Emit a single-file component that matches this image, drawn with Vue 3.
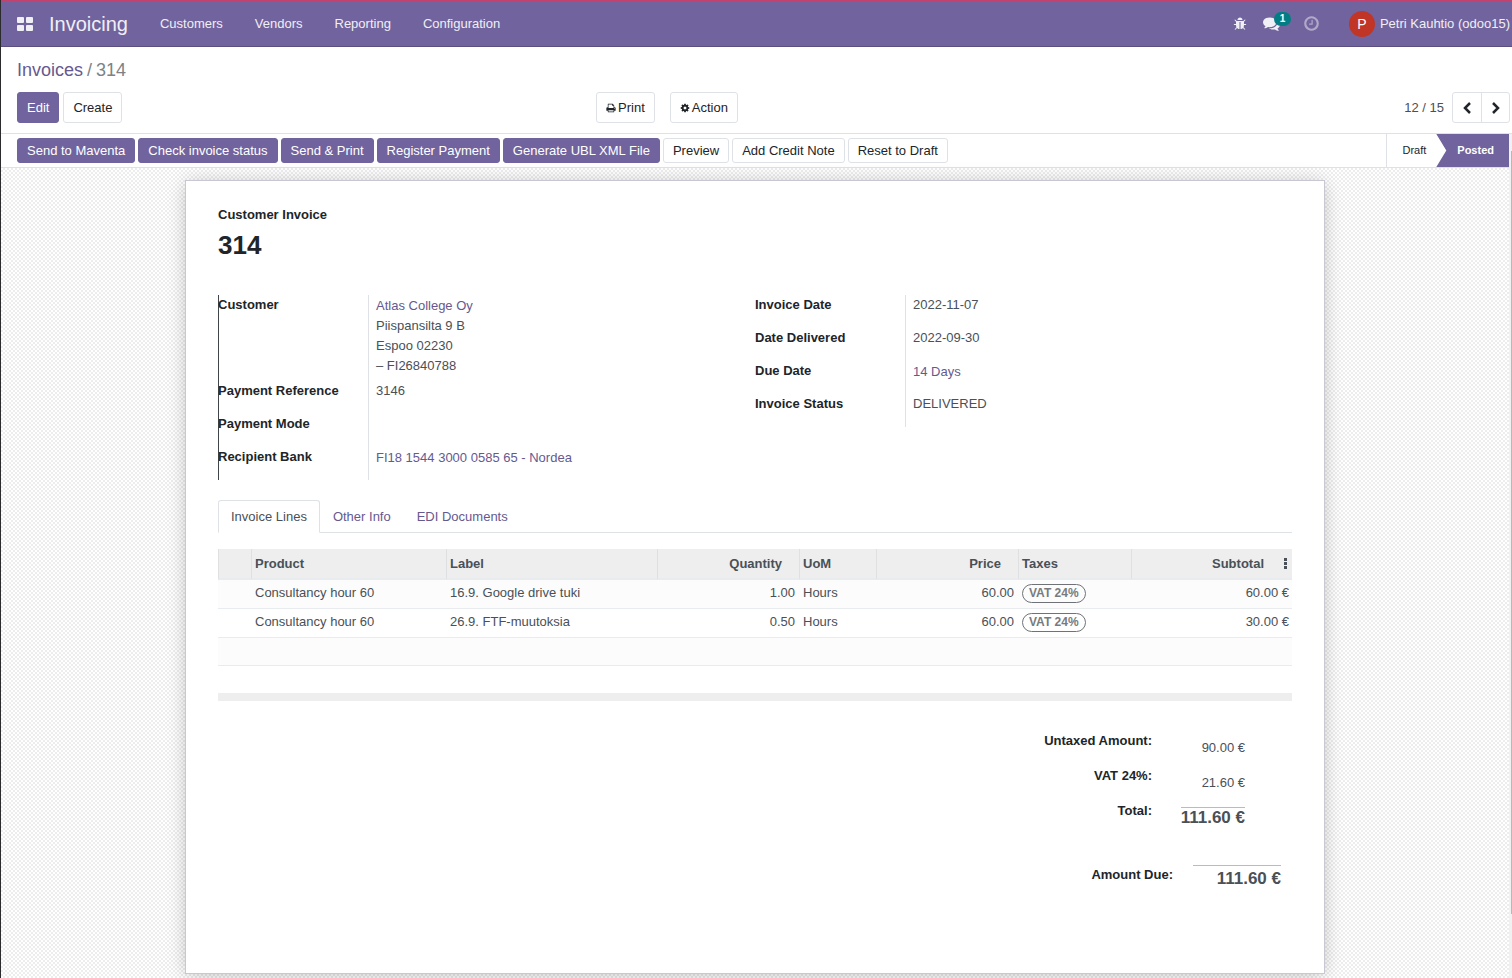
<script setup>
const menu = ['Customers', 'Vendors', 'Reporting', 'Configuration']

const actions = [
  { label: 'Send to Maventa', primary: true },
  { label: 'Check invoice status', primary: true },
  { label: 'Send & Print', primary: true },
  { label: 'Register Payment', primary: true },
  { label: 'Generate UBL XML File', primary: true },
  { label: 'Preview', primary: false },
  { label: 'Add Credit Note', primary: false },
  { label: 'Reset to Draft', primary: false },
]

const lines = [
  { product: 'Consultancy hour 60', label: '16.9. Google drive tuki', qty: '1.00', uom: 'Hours', price: '60.00', tax: 'VAT 24%', subtotal: '60.00 €' },
  { product: 'Consultancy hour 60', label: '26.9. FTF-muutoksia', qty: '0.50', uom: 'Hours', price: '60.00', tax: 'VAT 24%', subtotal: '30.00 €' },
]
</script>

<template>
  <div class="app">
    <header class="navbar">
      <button class="apps" aria-label="Apps">
        <svg width="16" height="14" viewBox="0 0 16 14" fill="currentColor">
          <rect width="7" height="6" rx="1" />
          <rect x="9" width="7" height="6" rx="1" />
          <rect y="8" width="7" height="6" rx="1" />
          <rect x="9" y="8" width="7" height="6" rx="1" />
        </svg>
      </button>
      <a class="brand" href="#">Invoicing</a>
      <nav class="menu">
        <a v-for="m in menu" :key="m" href="#">{{ m }}</a>
      </nav>
      <div class="tray">
        <button class="tray-item" aria-label="Debug tools">
          <svg width="14" height="14" viewBox="0 0 1792 1792" fill="currentColor"><path d="M1696 960q0 26-19 45t-45 19h-224q0 171-67 290l208 209q19 19 19 45t-19 45q-18 19-45 19t-45-19l-198-197q-5 5-15 13t-42 28.5-65 36.5-82 29-97 13v-896h-128v896q-51 0-101.5-13.5t-87-33-66-39-43.5-32.5l-15-14-183 207q-20 21-48 21-24 0-43-16-19-18-20.5-44.5t15.5-46.5l202-227q-58-114-58-274h-224q-26 0-45-19t-19-45 19-45 45-19h224v-294l-173-173q-19-19-19-45t19-45 45-19 45 19l173 173h844l173-173q19-19 45-19t45 19 19 45-19 45l-173 173v294h224q26 0 45 19t19 45zm-480-576h-640q0-133 93.5-226.5t226.5-93.5 226.5 93.5 93.5 226.5z" /></svg>
        </button>
        <button class="tray-item messages" aria-label="Conversations">
          <svg width="17" height="17" viewBox="0 0 1792 1792" fill="currentColor"><path d="M1408 768q0 139-94 257t-256.5 186.5-353.5 68.5q-86 0-176-16-124 88-278 128-36 9-86 16h-3q-11 0-20.5-8t-11.5-21q-1-3-1-6.5t.5-6.5 2-6l2.5-5 3.5-5.5 4-5 4.5-5 4-4.5q5-6 23-25t26-29.5 22.5-29 25-38.5 20.5-44q-124-72-195-177t-71-224q0-139 94-257t256.5-186.5 353.5-68.5 353.5 68.5 256.5 186.5 94 257zm384 256q0 120-71 224.5t-195 176.5q10 24 20.5 44t25 38.5 22.5 29 26 29.5 23 25q1 1 4 4.5t4.5 5 4 5 3.5 5.5l2.5 5 2 6 .5 6.5-1 6.5q-3 14-13 22t-22 7q-50-7-86-16-154-40-278-128-90 16-176 16-271 0-472-132 58 4 88 4 161 0 309-45t264-129q125-92 192-212t67-254q0-77-23-152 129 71 204 178t75 230z" /></svg>
          <span class="count">1</span>
        </button>
        <button class="tray-item clock" aria-label="Activities">
          <svg width="17" height="17" viewBox="0 0 1792 1792" fill="currentColor"><path d="M1024 544v448q0 14-9 23t-23 9h-320q-14 0-23-9t-9-23v-64q0-14 9-23t23-9h224v-352q0-14 9-23t23-9h64q14 0 23 9t9 23zm416 352q0-148-73-273t-198-198-273-73-273 73-198 198-73 273 73 273 198 198 273 73 273-73 198-198 73-273zm224 0q0 209-103 385.5t-279.5 279.5-385.5 103-385.5-103-279.5-279.5-103-385.5 103-385.5 279.5-279.5 385.5-103 385.5 103 279.5 279.5 103 385.5z" /></svg>
        </button>
        <button class="user"><span class="avatar">P</span><span>Petri Kauhtio (odoo15)</span></button>
      </div>
    </header>

    <section class="control">
      <div class="crumbs"><a href="#">Invoices</a><span class="sep">/</span><span>314</span></div>
      <div class="control-row">
        <div class="group">
          <button class="btn primary">Edit</button>
          <button class="btn">Create</button>
        </div>
        <div class="group wide">
          <button class="btn icon-btn">
            <svg width="10" height="10" viewBox="0 0 1792 1792" fill="currentColor"><path d="M448 1536h896v-256h-896v256zm0-640h896v-384h-160q-40 0-68-28t-28-68v-160h-640v640zm1152 64q0-26-19-45t-45-19-45 19-19 45 19 45 45 19 45-19 19-45zm128 0v416q0 13-9.5 22.5t-22.5 9.5h-224v160q0 40-28 68t-68 28h-960q-40 0-68-28t-28-68v-160h-224q-13 0-22.5-9.5t-9.5-22.5v-416q0-79 56.5-135.5t135.5-56.5h64v-544q0-40 28-68t68-28h672q40 0 88 20t76 48l152 152q28 28 48 76t20 88v256h64q79 0 135.5 56.5t56.5 135.5z" /></svg>
            Print
          </button>
          <button class="btn icon-btn">
            <svg width="10" height="10" viewBox="0 0 1792 1792" fill="currentColor"><path d="M1152 896q0-106-75-181t-181-75-181 75-75 181 75 181 181 75 181-75 75-181zm512-109v222q0 12-8 23t-20 13l-185 28q-19 54-39 91 35 50 107 138 10 12 10 25t-9 23q-27 37-99 108t-94 71q-12 0-26-9l-138-108q-44 23-91 38-16 136-29 186-7 28-36 28h-222q-14 0-24.5-8.5t-11.5-21.5l-28-184q-49-16-90-37l-141 107q-10 9-25 9-14 0-25-11-126-114-165-168-7-10-7-23 0-12 8-23 15-21 51-66.5t54-70.5q-27-50-41-99l-183-27q-13-2-21-12.5t-8-23.5v-222q0-12 8-23t19-13l186-28q14-46 39-92-40-57-107-138-10-12-10-24 0-10 9-23 26-36 98.5-107.5t94.5-71.5q13 0 26 10l138 107q44-23 91-38 16-136 29-186 7-28 36-28h222q14 0 24.5 8.5t11.5 21.5l28 184q49 16 90 37l142-107q9-9 24-9 13 0 25 10 129 119 165 170 7 8 7 22 0 12-8 23-15 21-51 66.5t-54 70.5q26 50 41 98l183 28q13 2 21 12.5t8 23.5z" /></svg>
            Action
          </button>
        </div>
        <div class="pager">
          <span class="pager-text">12 / 15</span>
          <div class="pager-btns">
            <button aria-label="Previous"><svg width="8" height="12" viewBox="0 0 8 12" fill="none" stroke="currentColor" stroke-width="2.5"><path d="M7 1 2 6l5 5" /></svg></button>
            <button aria-label="Next"><svg width="8" height="12" viewBox="0 0 8 12" fill="none" stroke="currentColor" stroke-width="2.5"><path d="m1 1 5 5-5 5" /></svg></button>
          </div>
        </div>
      </div>
    </section>

    <main class="content">
      <div class="view">
        <div class="statusbar">
          <div class="actions">
            <button v-for="a in actions" :key="a.label" class="btn small" :class="{ primary: a.primary }">{{ a.label }}</button>
          </div>
          <div class="stages">
            <span class="stage">Draft</span>
            <span class="stage current">Posted</span>
          </div>
        </div>

        <div class="backdrop">
          <article class="sheet">
            <div class="doc-type">Customer Invoice</div>
            <h1>314</h1>

            <div class="fields">
              <dl class="group-fields marked">
                <dt>Customer</dt>
                <dd class="address">
                  <a href="#">Atlas College Oy</a>
                  <span>Piispansilta 9 B</span>
                  <span>Espoo 02230</span>
                  <span>– FI26840788</span>
                </dd>
                <dt>Payment Reference</dt>
                <dd>3146</dd>
                <dt>Payment Mode</dt>
                <dd></dd>
                <dt>Recipient Bank</dt>
                <dd><a href="#">FI18 1544 3000 0585 65 - Nordea</a></dd>
              </dl>
              <dl class="group-fields">
                <dt>Invoice Date</dt>
                <dd>2022-11-07</dd>
                <dt>Date Delivered</dt>
                <dd>2022-09-30</dd>
                <dt>Due Date</dt>
                <dd><a href="#">14 Days</a></dd>
                <dt>Invoice Status</dt>
                <dd>DELIVERED</dd>
              </dl>
            </div>

            <div class="tabs">
              <a class="tab active" href="#">Invoice Lines</a>
              <a class="tab" href="#">Other Info</a>
              <a class="tab" href="#">EDI Documents</a>
            </div>

            <table class="lines">
              <colgroup>
                <col class="c-handle" /><col class="c-product" /><col class="c-label" /><col class="c-num" />
                <col class="c-uom" /><col class="c-num" /><col class="c-tax" /><col class="c-sub" />
              </colgroup>
              <thead>
                <tr>
                  <th></th>
                  <th>Product</th>
                  <th>Label</th>
                  <th class="num">Quantity</th>
                  <th>UoM</th>
                  <th class="num">Price</th>
                  <th>Taxes</th>
                  <th class="num last">
                    <div class="last-head">
                      Subtotal
                      <button class="kebab" aria-label="Optional columns">
                        <svg width="3" height="11" viewBox="0 0 3 11" fill="currentColor"><rect width="3" height="3" /><rect y="4" width="3" height="3" /><rect y="8" width="3" height="3" /></svg>
                      </button>
                    </div>
                  </th>
                </tr>
              </thead>
              <tbody>
                <tr v-for="l in lines" :key="l.label">
                  <td></td>
                  <td>{{ l.product }}</td>
                  <td>{{ l.label }}</td>
                  <td class="num">{{ l.qty }}</td>
                  <td>{{ l.uom }}</td>
                  <td class="num">{{ l.price }}</td>
                  <td><span class="tax">{{ l.tax }}</span></td>
                  <td class="num">{{ l.subtotal }}</td>
                </tr>
                <tr class="empty"><td colspan="8"></td></tr>
              </tbody>
              <tfoot>
                <tr><td colspan="8"></td></tr>
              </tfoot>
            </table>

            <dl class="totals">
              <dt>Untaxed Amount:</dt>
              <dd>90.00 €</dd>
              <dt>VAT 24%:</dt>
              <dd>21.60 €</dd>
              <dt>Total:</dt>
              <dd class="sum"><span>111.60 €</span></dd>
            </dl>
            <dl class="due">
              <dt>Amount Due:</dt>
              <dd>111.60 €</dd>
            </dl>
          </article>
        </div>
      </div>
      <div class="scroll"><div class="thumb"></div></div>
    </main>
  </div>
</template>

<style>
body {
  margin: 0;
}
</style>

<style scoped>
* {
  box-sizing: border-box;
}
.app {
  display: flex;
  flex-direction: column;
  min-height: 100vh;
  border-left: 1px solid #2b2b2e;
  font-family: "Liberation Sans", Arial, sans-serif;
  font-size: 13px;
  line-height: 20px;
  color: #495057;
  background: #fff;
}
a {
  color: #66598f;
  text-decoration: none;
}
button {
  font: inherit;
  color: inherit;
  background: none;
  border: 0;
  padding: 0;
}
svg {
  display: block;
}
dl,
dd,
h1 {
  margin: 0;
}
dt {
  font-weight: 700;
  color: #212529;
}

.navbar {
  display: flex;
  align-items: center;
  height: 47px;
  padding: 0 2px 0 16px;
  background: #71639e;
  border-top: 1px solid #c2426f;
  border-bottom: 1px solid #5a4f7f;
  color: #f0eff5;
  white-space: nowrap;
}
.navbar a {
  color: #f0eff5;
}
.brand {
  margin-left: 16px;
  font-size: 20px;
}
.menu {
  display: flex;
  gap: 32px;
  margin-left: 32px;
}
.tray {
  display: flex;
  align-items: center;
  margin-left: auto;
}
.messages {
  position: relative;
  margin-left: 16px;
}
.count {
  position: absolute;
  left: 11px;
  top: -3px;
  width: 17px;
  height: 14px;
  border-radius: 7px;
  background: #017e84;
  color: #fff;
  font-size: 10px;
  font-weight: 700;
  line-height: 14px;
}
.clock {
  margin-left: 23px;
  opacity: 0.5;
}
.user {
  display: flex;
  align-items: center;
  gap: 5px;
  margin-left: 29px;
}
.avatar {
  width: 26px;
  height: 26px;
  border-radius: 50%;
  background: #c03526;
  color: #fff;
  font-size: 14px;
  line-height: 26px;
}

.control {
  padding: 13px 2px 10px 16px;
  border-bottom: 1px solid #dee2e6;
}
.crumbs {
  font-size: 18px;
  color: #7c8287;
}
.sep {
  margin: 0 4px;
}
.control-row {
  display: grid;
  grid-template-columns: 579fr 808fr auto;
  margin-top: 12px;
}
.group {
  display: flex;
  gap: 4px;
}
.wide {
  gap: 15px;
}
.btn {
  height: 31px;
  padding: 0 9px;
  border: 1px solid #dee2e6;
  border-radius: 3px;
  background: #fff;
  color: #212529;
  white-space: nowrap;
}
.primary {
  background: #71639e;
  border-color: #71639e;
  color: #fff;
}
.small {
  height: 25px;
  line-height: 23px;
}
.icon-btn {
  display: flex;
  align-items: center;
  gap: 2px;
}
.pager {
  display: flex;
  align-items: center;
  gap: 8px;
}
.pager-btns {
  display: flex;
  border: 1px solid #dee2e6;
  border-radius: 3px;
  color: #212529;
}
.pager-btns button {
  display: flex;
  align-items: center;
  justify-content: center;
  width: 28px;
  height: 29px;
}
.pager-btns button + button {
  border-left: 1px solid #dee2e6;
}

.content {
  display: flex;
  flex: 1;
}
.view {
  display: flex;
  flex-direction: column;
  flex: 1;
  min-width: 0;
}
.scroll {
  width: 3px;
  padding: 17px 0 0 2px;
  background: #f1f1f1;
}
.thumb {
  height: 763px;
  background: #b8b8b8;
}
.statusbar {
  display: flex;
  justify-content: space-between;
  height: 34px;
  padding-left: 16px;
  border-bottom: 1px solid #dee2e6;
}
.actions {
  display: flex;
  align-items: center;
  gap: 3px;
}
.stages {
  display: flex;
  border-left: 1px solid #dee2e6;
  font-size: 11px;
  line-height: 33px;
  color: #212529;
}
.stage {
  padding: 0 10px 0 15px;
}
.current {
  padding: 0 15px 0 21px;
  background: #71639e;
  color: #fff;
  font-weight: 700;
  clip-path: polygon(0 0, 100% 0, 100% 100%, 0 100%, 10px 50%);
}

.backdrop {
  flex: 1;
  padding: 12px 16px 4px;
  background: repeating-conic-gradient(#ededed 0% 25%, #fff 0% 50%) 0 0 / 4px 4px;
}
.sheet {
  max-width: 1140px;
  margin: 0 auto;
  padding: 24px 32px 85px;
  background: #fff;
  border: 1px solid #c8c8d3;
  box-shadow: 0 2px 18px -2px rgba(0, 0, 0, 0.25);
}
.doc-type {
  font-weight: 700;
  color: #212529;
}
h1 {
  margin: 3px 0 32px;
  font-size: 26px;
  line-height: 35px;
  color: #212529;
}

.fields {
  display: grid;
  grid-template-columns: 1fr 1fr;
  align-items: start;
}
.group-fields {
  display: grid;
  grid-template-columns: 150px 1fr;
}
.group-fields dt,
.group-fields dd {
  min-height: 33px;
}
.group-fields dd {
  padding-left: 7px;
  border-left: 1px solid #dee2e6;
}
.group-fields dd a {
  display: block;
  padding-top: 1px;
}
.marked {
  box-shadow: inset 1px 0 #40454a;
}
.address {
  height: 86px;
}
.address span {
  display: block;
}

.tabs {
  display: flex;
  margin-top: 20px;
  border-bottom: 1px solid #dee2e6;
}
.tab {
  margin-bottom: -1px;
  padding: 6px 12px 5px;
  border: 1px solid transparent;
  border-radius: 3px 3px 0 0;
}
.active {
  background: #fff;
  border-color: #dee2e6;
  border-bottom-color: #fff;
  color: #495057;
}

.lines {
  width: 100%;
  margin-top: 16px;
  table-layout: fixed;
  border-collapse: separate;
  border-spacing: 0;
}
.c-handle {
  width: 33px;
}
.c-product {
  width: 195px;
}
.c-label {
  width: 211px;
}
.c-num {
  width: 142px;
}
.c-uom {
  width: 77px;
}
.c-tax {
  width: 113px;
}
.lines th {
  height: 31px;
  padding: 0 17px 0 3px;
  background: #eee;
  border-left: 1px solid #dee0e2;
  border-bottom: 2px solid #e9ecef;
  text-align: left;
}
.lines td {
  height: 29px;
  padding: 0 4px 2px;
  border-bottom: 1px solid #e9ecef;
}
.lines .num {
  text-align: right;
}
.lines td:last-child {
  padding-right: 3px;
}
.lines th.last {
  padding-right: 5px;
}
.last-head {
  display: flex;
  align-items: center;
  justify-content: flex-end;
  gap: 20px;
}
.lines tbody tr:nth-child(odd) {
  background: #fcfcfc;
}
.lines .empty td {
  height: 28px;
}
.lines tfoot td {
  height: 35px;
  padding: 0;
  border-bottom: 8px solid #eee;
}
.tax {
  display: block;
  width: fit-content;
  padding: 0 6px;
  border: 1px solid #6f7377;
  border-radius: 10px;
  color: #777b80;
  font-size: 12px;
  font-weight: 700;
  line-height: 17px;
}

.totals {
  display: grid;
  grid-template-columns: 1fr 93px;
  grid-auto-rows: 35px;
  margin: 30px 47px 0 0;
  text-align: right;
  line-height: 19px;
}
.totals dd {
  padding-top: 7px;
}
.totals .sum {
  padding-top: 6px;
}
.sum span {
  display: inline-block;
  border-top: 1px solid #bbb;
  font-size: 17px;
  font-weight: 700;
}
.due {
  display: grid;
  grid-template-columns: 1fr 88px;
  column-gap: 20px;
  margin: 29px 11px 0 0;
  text-align: right;
  line-height: 19px;
}
.due dd {
  padding-top: 3px;
  border-top: 1px solid #bbb;
  font-size: 17px;
  font-weight: 700;
}
</style>
